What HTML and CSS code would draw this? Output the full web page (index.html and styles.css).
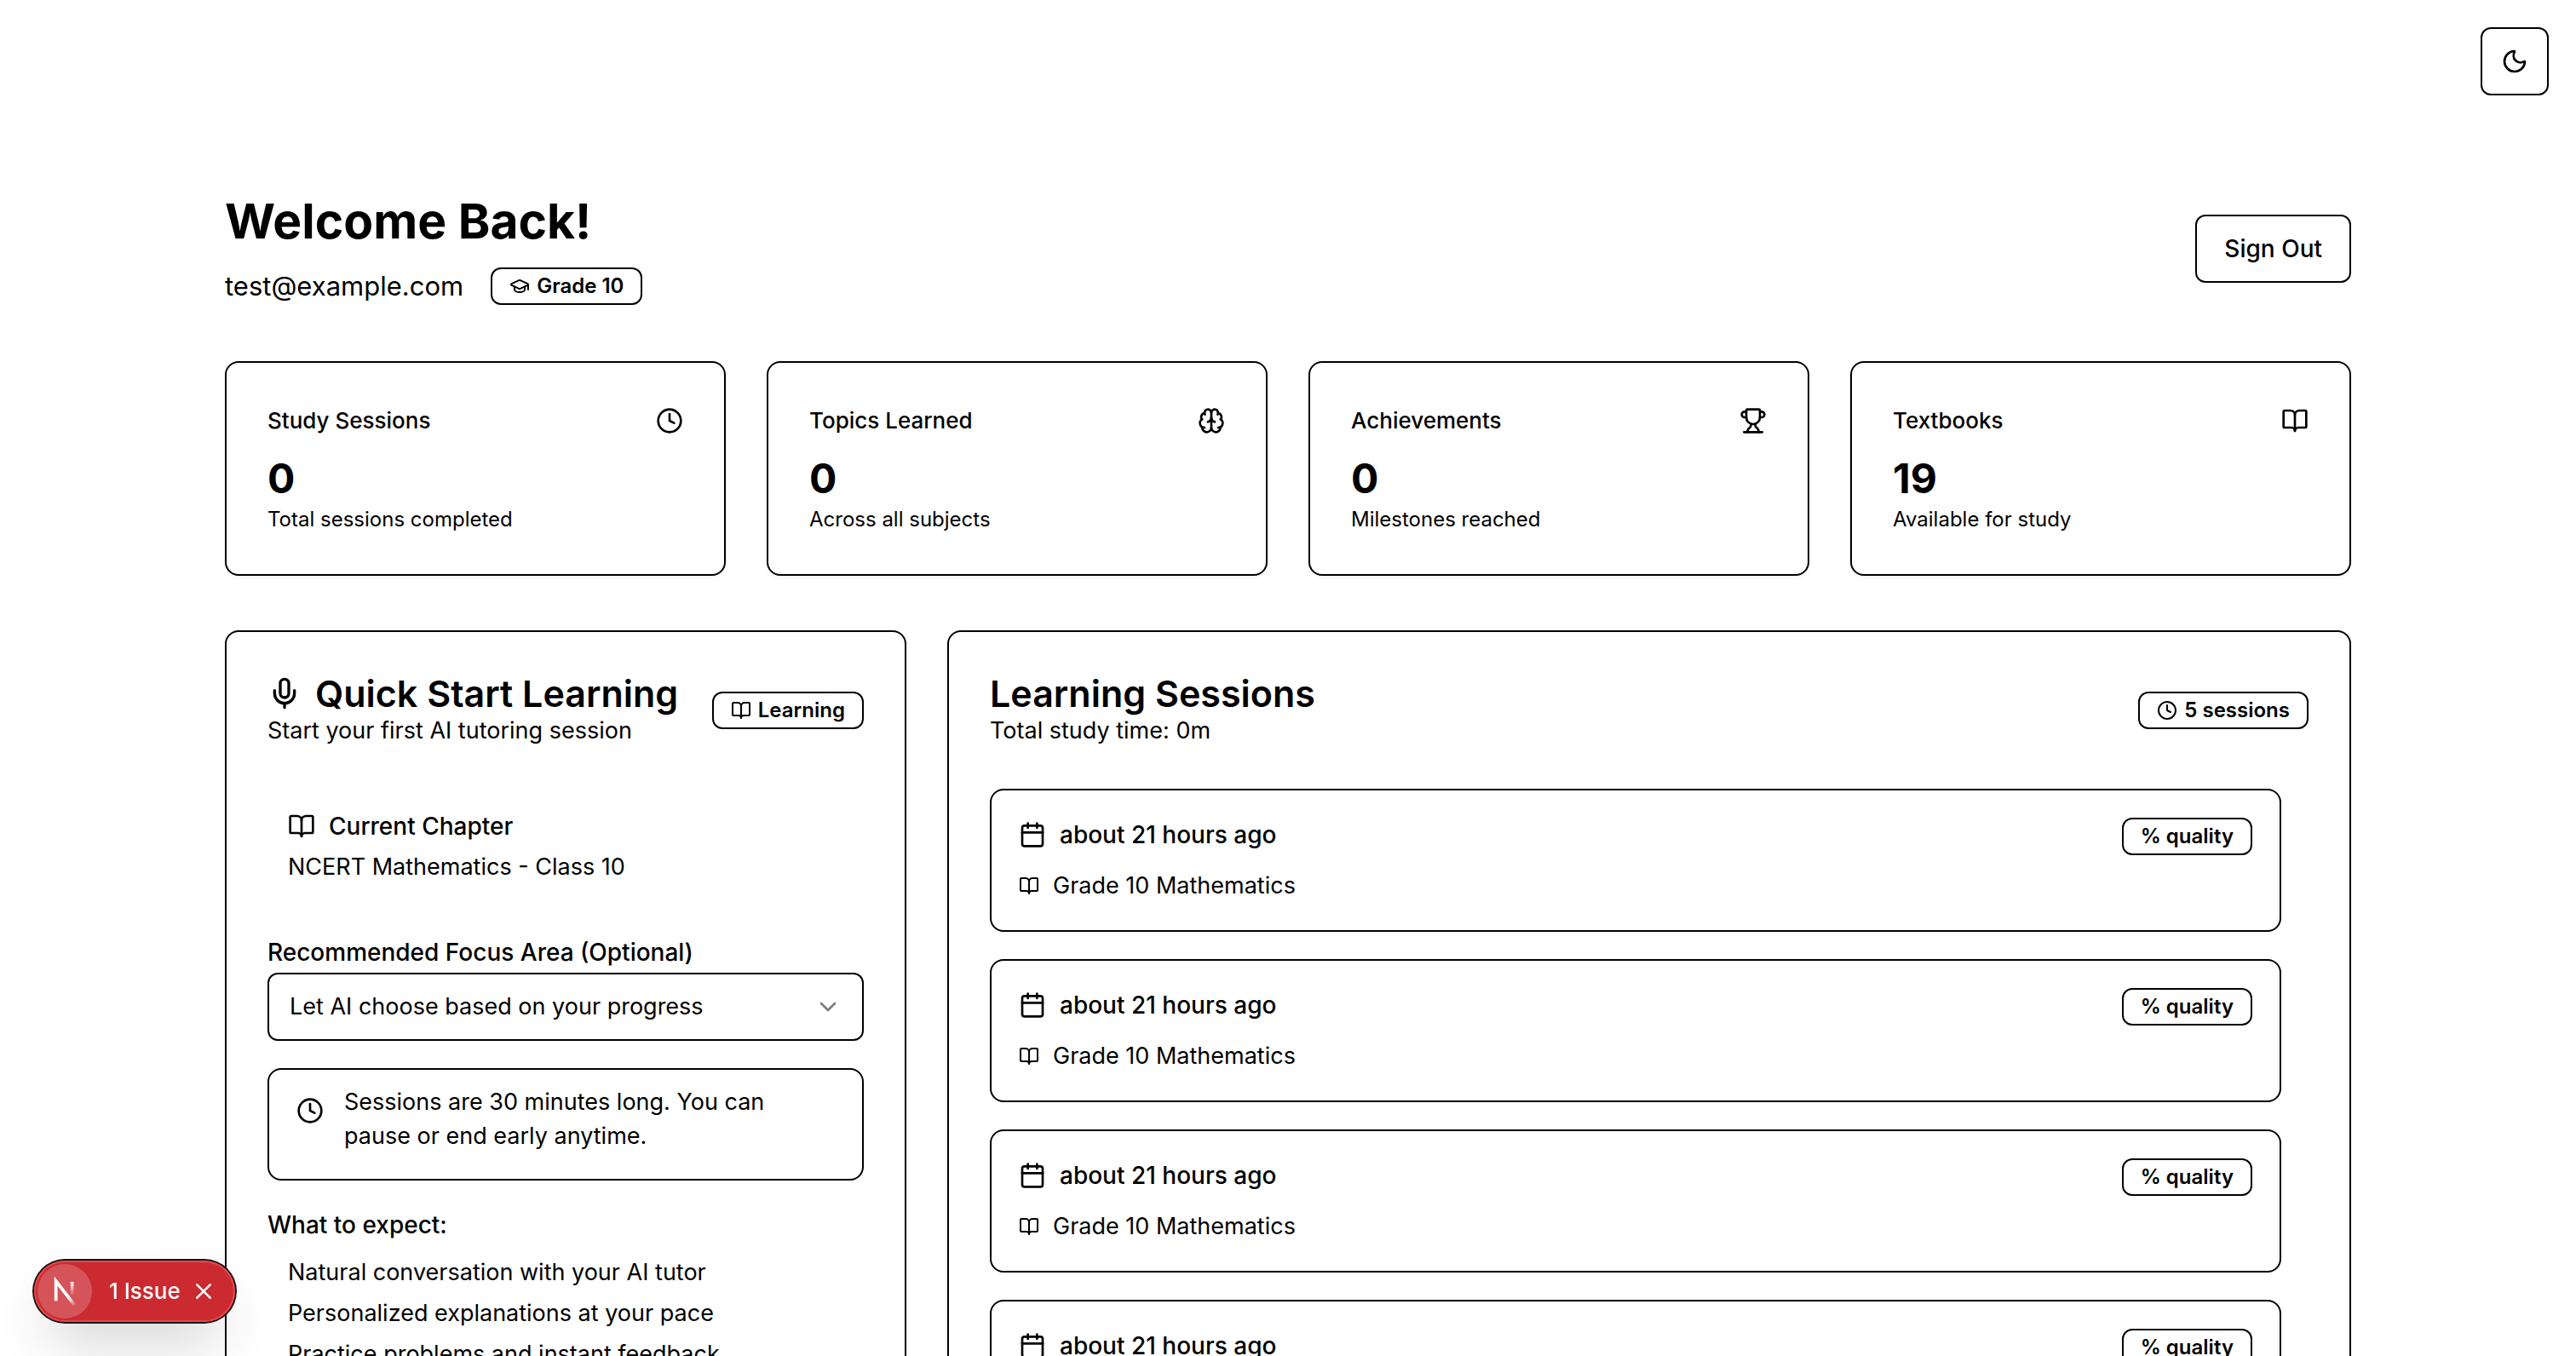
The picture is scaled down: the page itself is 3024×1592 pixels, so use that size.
FILE: index.html
```html
<!DOCTYPE html>
<html lang="en">
<head>
<meta charset="utf-8">
<meta name="viewport" content="width=device-width, initial-scale=1">
<title>Dashboard</title>
<link rel="stylesheet" href="styles.css">
</head>
<body>
<svg class="sprite" aria-hidden="true">
  <symbol id="moon" viewBox="0 0 24 24"><path d="M20.985 12.486a9 9 0 1 1-9.473-9.472c.405-.022.617.46.402.803a6 6 0 0 0 8.268 8.268c.344-.215.825-.004.803.401"/></symbol>
  <symbol id="clock" viewBox="0 0 24 24"><circle cx="12" cy="12" r="10"/><path d="M12 6v6l4 2"/></symbol>
  <symbol id="brain" viewBox="0 0 24 24"><path d="M12 18V5"/><path d="M15 13a4.17 4.17 0 0 1-3-4 4.17 4.17 0 0 1-3 4"/><path d="M17.598 6.5A3 3 0 1 0 12 5a3 3 0 1 0-5.598 1.5"/><path d="M17.997 5.125a4 4 0 0 1 2.526 5.77"/><path d="M18 18a4 4 0 0 0 2-7.464"/><path d="M19.967 17.483A4 4 0 1 1 12 18a4 4 0 1 1-7.967-.517"/><path d="M6 18a4 4 0 0 1-2-7.464"/><path d="M6.003 5.125a4 4 0 0 0-2.526 5.77"/></symbol>
  <symbol id="trophy" viewBox="0 0 24 24"><path d="M10 14.66v1.626a2 2 0 0 1-.976 1.696A5 5 0 0 0 7 21.978"/><path d="M14 14.66v1.626a2 2 0 0 0 .976 1.696A5 5 0 0 1 17 21.978"/><path d="M18 9h1.5a1 1 0 0 0 0-5H18"/><path d="M4 22h16"/><path d="M6 9a6 6 0 0 0 12 0V3a1 1 0 0 0-1-1H7a1 1 0 0 0-1 1z"/><path d="M6 9H4.5a1 1 0 0 1 0-5H6"/></symbol>
  <symbol id="book" viewBox="0 0 24 24"><path d="M12 7v14"/><path d="M3 18a1 1 0 0 1-1-1V4a1 1 0 0 1 1-1h5a4 4 0 0 1 4 4 4 4 0 0 1 4-4h5a1 1 0 0 1 1 1v13a1 1 0 0 1-1 1h-6a3 3 0 0 0-3 3 3 3 0 0 0-3-3z"/></symbol>
  <symbol id="mic" viewBox="0 0 24 24"><path d="M12 19v3"/><path d="M19 10v2a7 7 0 0 1-14 0v-2"/><rect x="9" y="2" width="6" height="13" rx="3"/></symbol>
  <symbol id="cap" viewBox="0 0 24 24"><path d="M21.42 10.922a1 1 0 0 0-.019-1.838L12.83 5.18a2 2 0 0 0-1.66 0L2.6 9.08a1 1 0 0 0 0 1.832l8.57 3.908a2 2 0 0 0 1.66 0z"/><path d="M22 10v6"/><path d="M6 12.5V16a6 3 0 0 0 12 0v-3.5"/></symbol>
  <symbol id="calendar" viewBox="0 0 24 24"><path d="M8 2v4"/><path d="M16 2v4"/><rect x="3" y="4" width="18" height="18" rx="2"/><path d="M3 10h18"/></symbol>
  <symbol id="chevron" viewBox="0 0 24 24"><path d="m6 9 6 6 6-6"/></symbol>
</svg>

<div class="page">
  <main class="container">
    <header class="header">
      <div>
        <h1 class="welcome">Welcome Back!</h1>
        <div class="account">
          <span class="email">test@example.com</span>
          <span class="badge"><svg class="icon icon-sm"><use href="#cap"/></svg>Grade 10</span>
        </div>
      </div>
      <button class="button" type="button">Sign Out</button>
    </header>

    <section class="stats" aria-label="Statistics">
      <article class="card">
        <div class="stat-head"><h2 class="stat-title">Study Sessions</h2><svg class="icon"><use href="#clock"/></svg></div>
        <p class="stat-value">0</p>
        <p class="stat-note">Total sessions completed</p>
      </article>
      <article class="card">
        <div class="stat-head"><h2 class="stat-title">Topics Learned</h2><svg class="icon"><use href="#brain"/></svg></div>
        <p class="stat-value">0</p>
        <p class="stat-note">Across all subjects</p>
      </article>
      <article class="card">
        <div class="stat-head"><h2 class="stat-title">Achievements</h2><svg class="icon"><use href="#trophy"/></svg></div>
        <p class="stat-value">0</p>
        <p class="stat-note">Milestones reached</p>
      </article>
      <article class="card">
        <div class="stat-head"><h2 class="stat-title">Textbooks</h2><svg class="icon"><use href="#book"/></svg></div>
        <p class="stat-value">19</p>
        <p class="stat-note">Available for study</p>
      </article>
    </section>

    <div class="panels">
      <section class="card">
        <div class="card-head">
          <div>
            <h2 class="card-title"><svg class="icon icon-lg"><use href="#mic"/></svg>Quick Start Learning</h2>
            <p class="text">Start your first AI tutoring session</p>
          </div>
          <span class="badge"><svg class="icon icon-sm"><use href="#book"/></svg>Learning</span>
        </div>
        <div class="stack">
          <div class="chapter">
            <h3 class="row label"><svg class="icon"><use href="#book"/></svg>Current Chapter</h3>
            <p class="text">NCERT Mathematics - Class 10</p>
          </div>
          <div class="field">
            <label class="field-label" for="focus">Recommended Focus Area (Optional)</label>
            <div class="select-wrap">
              <select class="select" id="focus"><option>Let AI choose based on your progress</option></select>
              <svg class="icon select-arrow"><use href="#chevron"/></svg>
            </div>
          </div>
          <div class="alert">
            <svg class="icon"><use href="#clock"/></svg>
            <p class="text">Sessions are 30 minutes long. You can pause or end early anytime.</p>
          </div>
          <div>
            <h3 class="label">What to expect:</h3>
            <ul class="expect">
              <li class="text">Natural conversation with your AI tutor</li>
              <li class="text">Personalized explanations at your pace</li>
              <li class="text">Practice problems and instant feedback</li>
            </ul>
          </div>
        </div>
      </section>

      <section class="card">
        <div class="card-head">
          <div>
            <h2 class="card-title">Learning Sessions</h2>
            <p class="text">Total study time: 0m</p>
          </div>
          <span class="badge"><svg class="icon icon-sm"><use href="#clock"/></svg>5 sessions</span>
        </div>
        <ul class="sessions">
          <li class="session">
            <div class="session-head"><h3 class="row label"><svg class="icon"><use href="#calendar"/></svg>about 21 hours ago</h3><span class="badge">% quality</span></div>
            <p class="row text"><svg class="icon icon-sm"><use href="#book"/></svg>Grade 10 Mathematics</p>
          </li>
          <li class="session">
            <div class="session-head"><h3 class="row label"><svg class="icon"><use href="#calendar"/></svg>about 21 hours ago</h3><span class="badge">% quality</span></div>
            <p class="row text"><svg class="icon icon-sm"><use href="#book"/></svg>Grade 10 Mathematics</p>
          </li>
          <li class="session">
            <div class="session-head"><h3 class="row label"><svg class="icon"><use href="#calendar"/></svg>about 21 hours ago</h3><span class="badge">% quality</span></div>
            <p class="row text"><svg class="icon icon-sm"><use href="#book"/></svg>Grade 10 Mathematics</p>
          </li>
          <li class="session">
            <div class="session-head"><h3 class="row label"><svg class="icon"><use href="#calendar"/></svg>about 21 hours ago</h3><span class="badge">% quality</span></div>
            <p class="row text"><svg class="icon icon-sm"><use href="#book"/></svg>Grade 10 Mathematics</p>
          </li>
          <li class="session">
            <div class="session-head"><h3 class="row label"><svg class="icon"><use href="#calendar"/></svg>about 21 hours ago</h3><span class="badge">% quality</span></div>
            <p class="row text"><svg class="icon icon-sm"><use href="#book"/></svg>Grade 10 Mathematics</p>
          </li>
        </ul>
      </section>
    </div>
  </main>
</div>

<button class="button theme-toggle" type="button" aria-label="Toggle theme"><svg class="icon"><use href="#moon"/></svg></button>

<div class="issues">
  <button class="issues-logo" type="button" aria-label="Open developer tools">
    <svg viewBox="0 4 32 32" width="64" height="64" fill="none" stroke-width="1.86">
      <defs>
        <linearGradient id="fade-diagonal" gradientUnits="userSpaceOnUse" x1="9.96" y1="11.12" x2="13.6" y2="15.6"><stop stop-color="#fff"/><stop offset="1" stop-color="#fff" stop-opacity="0"/></linearGradient>
        <linearGradient id="fade-stem" gradientUnits="userSpaceOnUse" x1="11.82" y1="1.4" x2="11.79" y2="9.63"><stop stop-color="#fff"/><stop offset="1" stop-color="#fff" stop-opacity="0"/></linearGradient>
      </defs>
      <g transform="translate(8.5 13)"><path d="M13.3 15.2 2.34 1v11.6" stroke="url(#fade-diagonal)"/><path d="M11.83 1.5v11.6" stroke="url(#fade-stem)"/></g>
    </svg>
  </button>
  <button class="issues-open" type="button">1 Issue</button>
  <button class="issues-close" type="button" aria-label="Dismiss"><svg viewBox="0 0 18 18" width="18" height="18" fill="none" stroke="#fff" stroke-width="2.6" stroke-linecap="round"><path d="M1.3 1.3l15.4 15.4M16.7 1.3 1.3 16.7"/></svg></button>
</div>
</body>
</html>
```
FILE: styles.css
```css
*, *::before, *::after { box-sizing: border-box; }

body {
  margin: 0;
  background: #fff;
  color: #000;
  font-family: Inter, "Liberation Sans", sans-serif;
  font-size: 31px;
  line-height: 48px;
}

h1, h2, h3, p, ul { margin: 0; padding: 0; }
ul { list-style: none; }
button, select { font: inherit; color: inherit; }

.sprite { position: absolute; width: 0; height: 0; }

.icon {
  width: 32px;
  height: 32px;
  flex: none;
  fill: none;
  stroke: currentColor;
  stroke-width: 2;
  stroke-linecap: round;
  stroke-linejoin: round;
}
.icon-sm { width: 24px; height: 24px; }
.icon-lg { width: 40px; height: 40px; }

.page { height: 100vh; overflow-y: auto; scrollbar-width: none; }

.container {
  max-width: 2560px;
  margin: 0 auto;
  padding: 224px 32px 64px;
}

/* Header */
.header {
  display: flex;
  align-items: center;
  justify-content: space-between;
  margin-bottom: 64px;
}
.welcome { font-size: 57px; line-height: 72px; font-weight: 700; }
.account { display: flex; align-items: center; gap: 32px; margin-top: 16px; }

.button {
  height: 80px;
  padding: 0 32px;
  border: 2px solid #000;
  border-radius: 12px;
  background: #fff;
  font-size: 28px;
  font-weight: 500;
}

.badge {
  display: inline-flex;
  align-items: center;
  gap: 8px;
  flex: none;
  padding: 4px 20px;
  border: 2px solid #000;
  border-radius: 12px;
  font-size: 24px;
  line-height: 32px;
  font-weight: 600;
}

/* Cards */
.card {
  padding: 48px;
  border: 2px solid #000;
  border-radius: 16px;
  background: #fff;
  box-shadow: 0 2px 4px rgba(0, 0, 0, .05);
}

.stats {
  display: grid;
  grid-template-columns: repeat(4, 1fr);
  gap: 48px;
  margin-bottom: 64px;
}
.stat-head {
  display: flex;
  align-items: center;
  justify-content: space-between;
  margin-bottom: 16px;
}
.stat-title { font-size: 26px; line-height: 40px; font-weight: 500; }
.stat-value { font-size: 48px; line-height: 64px; font-weight: 700; }
.stat-note { font-size: 24px; line-height: 32px; }

.panels {
  display: grid;
  grid-template-columns: repeat(3, 1fr);
  gap: 48px;
}
.panels > :last-child { grid-column: span 2; }

.card-head {
  display: flex;
  align-items: center;
  justify-content: space-between;
  margin-bottom: 48px;
}
.card-title {
  display: flex;
  align-items: center;
  gap: 16px;
  font-size: 43px;
  line-height: 48px;
  font-weight: 600;
}

.text { font-size: 27px; line-height: 40px; }
.label { font-size: 28px; line-height: 40px; font-weight: 500; }
.row { display: flex; align-items: center; gap: 16px; }

/* Quick start */
.stack { display: flex; flex-direction: column; gap: 32px; }
.chapter { display: grid; gap: 8px; padding: 24px; }
.field-label { display: block; font-size: 28px; font-weight: 500; }
.select-wrap { position: relative; }
.select {
  display: block;
  width: 100%;
  height: 80px;
  padding: 0 80px 0 24px;
  border: 2px solid #000;
  border-radius: 12px;
  background: #fff;
  font-size: 27px;
  appearance: none;
}
.select-arrow {
  position: absolute;
  top: 24px;
  right: 26px;
  opacity: .5;
  pointer-events: none;
}
.alert {
  display: flex;
  gap: 24px;
  padding: 18px 32px 30px;
  border: 2px solid #000;
  border-radius: 16px;
}
.alert .icon { margin-top: 14px; }
.expect { display: grid; gap: 8px; margin-top: 16px; padding-left: 24px; }

/* Sessions */
.sessions { display: grid; gap: 32px; padding-right: 32px; }
.session { padding: 32px; border: 2px solid #000; border-radius: 16px; }
.session-head {
  display: flex;
  align-items: flex-start;
  justify-content: space-between;
  margin-bottom: 16px;
}

/* Floating controls */
.theme-toggle {
  position: fixed;
  top: 32px;
  right: 32px;
  display: grid;
  place-items: center;
  width: 80px;
  padding: 0;
}

.issues {
  position: fixed;
  left: 40px;
  bottom: 40px;
  display: flex;
  align-items: center;
  height: 72px;
  padding: 0 28px 0 4px;
  border-radius: 36px;
  background: #ca2a30;
  color: #fff;
  box-shadow: 0 0 0 2px #171717, inset 0 0 0 2px #e5484d, 0 32px 64px -16px rgba(0, 0, 0, .24);
}
.issues button { padding: 0; border: 0; background: none; }
.issues .issues-logo {
  width: 64px;
  height: 64px;
  border-radius: 50%;
  background: rgba(255, 255, 255, .2);
}
.issues-logo svg, .issues-close svg { display: block; }
.issues .issues-open { margin: 0 18px 0 20px; font-size: 26px; line-height: 40px; font-weight: 500; }
```
